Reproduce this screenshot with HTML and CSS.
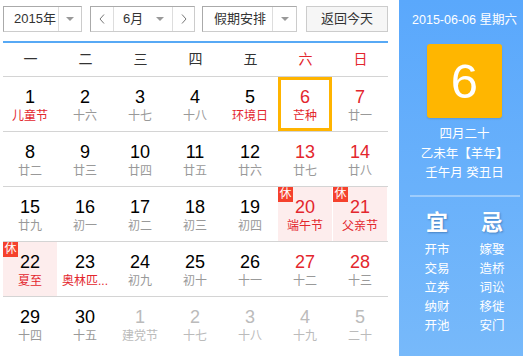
FILE: index.html
```html
<!DOCTYPE html>
<html lang="zh-CN">
<head>
<meta charset="utf-8">
<title>万年历</title>
<link rel="stylesheet" href="styles.css">
</head>
<body>
<div class="app">
  <div class="cal">
    <div class="toolbar">
      <div class="select year">
        <span class="label">2015年</span>
        <span class="sel-arrow"><i class="tri"></i></span>
      </div>
      <div class="month-group">
        <span class="nav"><svg width="6" height="10" viewBox="0 0 6 10"><polyline points="5,0.5 1,5 5,9.5" fill="none" stroke="#777" stroke-width="1"/></svg></span>
        <span class="month"><span>6月</span><i class="tri"></i></span>
        <span class="nav next"><svg width="6" height="10" viewBox="0 0 6 10"><polyline points="1,0.5 5,5 1,9.5" fill="none" stroke="#777" stroke-width="1"/></svg></span>
      </div>
      <div class="select holiday">
        <span class="label">假期安排</span>
        <span class="sel-arrow"><i class="tri"></i></span>
      </div>
      <div class="today">返回今天</div>
    </div>

    <div class="grid">
      <div class="week">
        <span>一</span><span>二</span><span>三</span><span>四</span><span>五</span><span class="wk-red">六</span><span class="wk-red">日</span>
      </div>
      <div class="row">
        <div class="cell"><div class="num">1</div><div class="lunar fest">儿童节</div></div>
        <div class="cell"><div class="num">2</div><div class="lunar">十六</div></div>
        <div class="cell"><div class="num">3</div><div class="lunar">十七</div></div>
        <div class="cell"><div class="num">4</div><div class="lunar">十八</div></div>
        <div class="cell"><div class="num">5</div><div class="lunar fest">环境日</div></div>
        <div class="cell sel"><div class="num red">6</div><div class="lunar fest">芒种</div></div>
        <div class="cell"><div class="num red">7</div><div class="lunar">廿一</div></div>
      </div>
      <div class="row">
        <div class="cell"><div class="num">8</div><div class="lunar">廿二</div></div>
        <div class="cell"><div class="num">9</div><div class="lunar">廿三</div></div>
        <div class="cell"><div class="num">10</div><div class="lunar">廿四</div></div>
        <div class="cell"><div class="num">11</div><div class="lunar">廿五</div></div>
        <div class="cell"><div class="num">12</div><div class="lunar">廿六</div></div>
        <div class="cell"><div class="num red">13</div><div class="lunar">廿七</div></div>
        <div class="cell"><div class="num red">14</div><div class="lunar">廿八</div></div>
      </div>
      <div class="row">
        <div class="cell"><div class="num">15</div><div class="lunar">廿九</div></div>
        <div class="cell"><div class="num">16</div><div class="lunar">初一</div></div>
        <div class="cell"><div class="num">17</div><div class="lunar">初二</div></div>
        <div class="cell"><div class="num">18</div><div class="lunar">初三</div></div>
        <div class="cell"><div class="num">19</div><div class="lunar">初四</div></div>
        <div class="cell hol"><span class="badge">休</span><div class="num red">20</div><div class="lunar fest">端午节</div></div>
        <div class="cell hol"><span class="badge">休</span><div class="num red">21</div><div class="lunar fest">父亲节</div></div>
      </div>
      <div class="row">
        <div class="cell hol"><span class="badge">休</span><div class="num">22</div><div class="lunar fest">夏至</div></div>
        <div class="cell"><div class="num">23</div><div class="lunar fest">奥林匹...</div></div>
        <div class="cell"><div class="num">24</div><div class="lunar">初九</div></div>
        <div class="cell"><div class="num">25</div><div class="lunar">初十</div></div>
        <div class="cell"><div class="num">26</div><div class="lunar">十一</div></div>
        <div class="cell"><div class="num red">27</div><div class="lunar">十二</div></div>
        <div class="cell"><div class="num red">28</div><div class="lunar">十三</div></div>
      </div>
      <div class="row">
        <div class="cell"><div class="num">29</div><div class="lunar">十四</div></div>
        <div class="cell"><div class="num">30</div><div class="lunar">十五</div></div>
        <div class="cell other"><div class="num">1</div><div class="lunar">建党节</div></div>
        <div class="cell other"><div class="num">2</div><div class="lunar">十七</div></div>
        <div class="cell other"><div class="num">3</div><div class="lunar">十八</div></div>
        <div class="cell other"><div class="num">4</div><div class="lunar">十九</div></div>
        <div class="cell other"><div class="num">5</div><div class="lunar">二十</div></div>
      </div>
    </div>
  </div>

  <aside class="panel">
    <div class="date">2015-06-06 星期六</div>
    <div class="daybox">6</div>
    <div class="lunar-info">
      <div>四月二十</div>
      <div>乙未年【羊年】</div>
      <div>壬午月 癸丑日</div>
    </div>
    <div class="divider"></div>
    <div class="yiji">
      <div class="big">宜</div>
      <div class="big">忌</div>
      <ul class="list">
        <li>开市</li><li>交易</li><li>立券</li><li>纳财</li><li>开池</li>
      </ul>
      <ul class="list">
        <li>嫁娶</li><li>造桥</li><li>词讼</li><li>移徙</li><li>安门</li>
      </ul>
    </div>
  </aside>
</div>
</body>
</html>
```

FILE: styles.css
```css
* { box-sizing: border-box; }

body {
  margin: 0;
  background: #fff;
  font-family: "Liberation Sans", "Noto Sans CJK SC", sans-serif;
}

.app {
  display: flex;
  height: 356px;
  overflow: hidden;
}

.cal {
  width: 385px;
  margin-left: 3px;
  padding-top: 6px;
}

/* toolbar */
.toolbar {
  display: flex;
  height: 26px;
}

.select {
  display: flex;
  height: 26px;
  border: 1px solid #ccc;
  border-color: #aaa #ccc #ccc #aaa;
  font-size: 13px;
  color: #333;
  background: #fff;
}

.select .label {
  line-height: 24px;
  white-space: nowrap;
}

.year { width: 79px; }
.year .label { width: 54px; padding-left: 10px; }

.holiday { width: 95px; margin-left: 7px; }
.holiday .label { width: 69px; padding-left: 11px; }

.sel-arrow {
  flex: 1;
  border-left: 1px solid #ddd;
  display: flex;
  align-items: center;
  justify-content: center;
}

.tri {
  display: block;
  width: 0;
  height: 0;
  border-left: 4px solid transparent;
  border-right: 4px solid transparent;
  border-top: 4px solid #999;
}

.month-group {
  display: flex;
  width: 105px;
  height: 26px;
  margin-left: 8px;
  border: 1px solid #ccc;
  border-color: #aaa #ccc #ccc #aaa;
  font-size: 13px;
  color: #333;
}

.nav {
  width: 22px;
  display: flex;
  align-items: center;
  justify-content: center;
}

.nav.next { border-left: 1px solid #ddd; }

.month {
  width: 59px;
  border-left: 1px solid #ddd;
  display: flex;
  align-items: center;
  padding-left: 9px;
  padding-right: 8px;
  line-height: 24px;
}

.month .tri { margin-left: auto; }

.today {
  width: 82px;
  height: 26px;
  margin-left: 9px;
  border: 1px solid #ccc;
  background: #f6f6f6;
  font-size: 13px;
  line-height: 24px;
  text-align: center;
  color: #333;
}

/* grid */
.grid {
  margin-top: 9px;
  border-top: 2px solid #57a9f5;
}

.week {
  display: grid;
  grid-template-columns: repeat(7, 55px);
  height: 34px;
  line-height: 33px;
  border-bottom: 1px solid #d4d4d4;
  text-align: center;
  font-size: 14px;
  color: #333;
}

.wk-red { color: #e3262d; }

.row {
  display: grid;
  grid-template-columns: repeat(7, 55px);
  border-bottom: 1px solid #d4d4d4;
}

.row:last-child { border-bottom: none; }

.cell {
  position: relative;
  height: 54px;
  margin-right: 1px;
  padding-top: 9px;
  text-align: center;
}

.num {
  font-size: 18px;
  line-height: 22px;
  color: #000;
}

.num.red { color: #e3262d; }

.lunar {
  font-size: 12px;
  line-height: 16px;
  color: #999;
  white-space: nowrap;
}

.lunar.fest { color: #e3262d; }

.other .num,
.other .lunar { color: #bbb; }

.hol { background: #fdeded; }

.sel {
  border: 3px solid #ffb400;
  padding-top: 6px;
}

.badge {
  position: absolute;
  top: 0;
  left: 0;
  width: 15px;
  height: 15px;
  background: #f5412d;
  color: #fff;
  font-size: 12px;
  line-height: 15px;
  text-align: center;
}

/* side panel */
.panel {
  width: 124px;
  margin-left: 11px;
  padding-left: 7px;
  background: linear-gradient(#5aa8fc, #77b9fa);
  color: #fff;
  display: flex;
  flex-direction: column;
  align-items: center;
}

.date {
  margin-top: 11px;
  font-size: 12.5px;
  line-height: 18px;
  white-space: nowrap;
}

.daybox {
  margin-top: 15px;
  width: 75px;
  height: 74px;
  background: #ffb600;
  border-radius: 3px;
  box-shadow: 0 1px 2px rgba(0, 0, 0, 0.12);
  font-size: 49px;
  line-height: 74px;
  text-align: center;
}

.lunar-info {
  margin-top: 7px;
  font-size: 12.5px;
  line-height: 19.5px;
  text-align: center;
  white-space: nowrap;
}

.divider {
  margin-top: 11px;
  width: 110px;
  height: 2px;
  background: rgba(255, 255, 255, 0.35);
}

.yiji {
  display: grid;
  grid-template-columns: 55px 55px;
  margin-top: 13px;
  text-align: center;
}

.big {
  font-size: 22px;
  line-height: 26px;
  font-weight: bold;
  text-shadow: 1px 1px 2px rgba(0, 40, 90, 0.35);
}

.list {
  list-style: none;
  margin: 5px 0 0;
  padding: 0;
  font-size: 12.5px;
  line-height: 19px;
}
```
